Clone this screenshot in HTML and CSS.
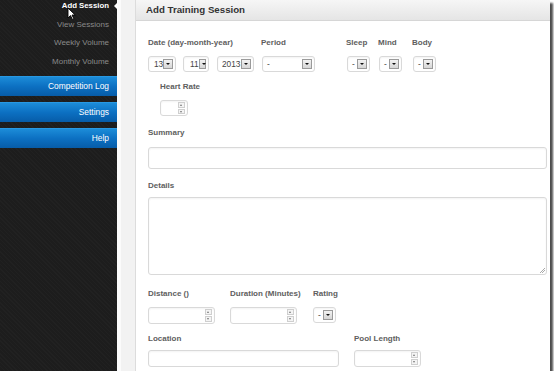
FILE: index.html
```html
<!DOCTYPE html>
<html lang="en">
<head>
    <meta charset="UTF-8">
    <meta name="viewport" content="width=device-width, initial-scale=1.0">
    <title>Add Training Session</title>
    <link rel="stylesheet" href="styles.css">
</head>
<body>
    <div class="frame">
        <!-- Left navigation -->
        <div class="sidebar">
            <ul class="subnav">
                <li class="active">Add Session
                    <span class="pointer"></span>
                    <svg class="cursor" width="9" height="13" viewBox="0 0 9 13"><path d="M1 1 L1 11 L3.5 8.6 L5.4 12.4 L6.8 11.7 L5 8 L8.2 8 Z" fill="#fff" stroke="#000" stroke-width="0.9"/></svg>
                </li>
                <li>View Sessions</li>
                <li>Weekly Volume</li>
                <li>Monthly Volume</li>
            </ul>
            <a href="#" class="nav-btn first">Competition Log</a>
            <a href="#" class="nav-btn">Settings</a>
            <a href="#" class="nav-btn">Help</a>
        </div>

        <div class="main">
            <div class="panel">
                <div class="panel-header">Add Training Session</div>
                <form class="panel-body">
                    <div class="row row-top">
                        <div class="group g-date">
                            <label>Date (day-month-year)</label>
                            <div class="controls">
                                <div class="dropdown w-day"><span>13</span><i class="btn"></i></div>
                                <div class="dropdown w-month"><span>11</span><i class="btn"></i></div>
                                <div class="dropdown w-year"><span>2013</span><i class="btn"></i></div>
                            </div>
                        </div>
                        <div class="group g-period">
                            <label>Period</label>
                            <div class="controls">
                                <div class="dropdown w-period"><span>-</span><i class="btn"></i></div>
                            </div>
                        </div>
                        <div class="group g-sleep">
                            <label>Sleep</label>
                            <div class="controls">
                                <div class="dropdown w-small"><span>-</span><i class="btn"></i></div>
                            </div>
                        </div>
                        <div class="group g-mind">
                            <label>Mind</label>
                            <div class="controls">
                                <div class="dropdown w-small"><span>-</span><i class="btn"></i></div>
                            </div>
                        </div>
                        <div class="group">
                            <label>Body</label>
                            <div class="controls">
                                <div class="dropdown w-small"><span>-</span><i class="btn"></i></div>
                            </div>
                        </div>
                    </div>

                    <div class="group g-heart">
                        <label>Heart Rate</label>
                        <div class="controls">
                            <div class="number w-heart"><i class="spin"><b class="up"></b><b class="down"></b></i></div>
                        </div>
                    </div>

                    <div class="group g-summary">
                        <label>Summary</label>
                        <div class="text-input summary"></div>
                    </div>

                    <div class="group g-details">
                        <label>Details</label>
                        <div class="text-input details"><i class="grip"></i></div>
                    </div>

                    <div class="row row-dist">
                        <div class="group g-distance">
                            <label>Distance ()</label>
                            <div class="controls">
                                <div class="number w-dist"><i class="spin"><b class="up"></b><b class="down"></b></i></div>
                            </div>
                        </div>
                        <div class="group g-duration">
                            <label>Duration (Minutes)</label>
                            <div class="controls">
                                <div class="number w-dist"><i class="spin"><b class="up"></b><b class="down"></b></i></div>
                            </div>
                        </div>
                        <div class="group">
                            <label>Rating</label>
                            <div class="controls">
                                <div class="dropdown w-rating"><span>-</span><i class="btn"></i></div>
                            </div>
                        </div>
                    </div>

                    <div class="row row-loc">
                        <div class="group g-location">
                            <label>Location</label>
                            <div class="controls">
                                <div class="text-input location"></div>
                            </div>
                        </div>
                        <div class="group">
                            <label>Pool Length</label>
                            <div class="controls">
                                <div class="number w-dist"><i class="spin"><b class="up"></b><b class="down"></b></i></div>
                            </div>
                        </div>
                    </div>
                </form>
            </div>
        </div>
    </div>
</body>
</html>
```

FILE: styles.css
```css
body {
    margin: 0;
    padding: 0;
    background-color: #ffffff;
    font-family: "Liberation Sans", Arial, sans-serif;
}

.frame {
    display: flex;
    width: 550px;
    height: 371px;
    overflow: hidden;
    box-shadow: 3px 3px 2px rgba(0, 0, 0, 0.7);
}

/* Sidebar */
.sidebar {
    width: 117px;
    flex-shrink: 0;
    background-color: #1d1d1d;
    background-image: repeating-linear-gradient(45deg, rgba(255, 255, 255, 0.02) 0 1px, transparent 1px 3px);
}

.subnav {
    list-style: none;
    margin: 0;
    padding: 0;
}

.subnav li {
    position: relative;
    height: 18.5px;
    line-height: 12px;
    padding-right: 8px;
    text-align: right;
    font-size: 8px;
    color: #8a8a8a;
}

.subnav li.active {
    color: #ffffff;
    font-weight: bold;
    font-size: 7.8px;
}

.pointer {
    position: absolute;
    right: -1px;
    top: 2px;
    width: 0;
    height: 0;
    border-top: 4px solid transparent;
    border-bottom: 4px solid transparent;
    border-right: 4px solid #ffffff;
}

.cursor {
    position: absolute;
    left: 67px;
    top: 7px;
}

.nav-btn {
    display: block;
    height: 20px;
    line-height: 19px;
    margin-bottom: 6px;
    padding-right: 8px;
    text-align: right;
    font-size: 8.4px;
    color: #ffffff;
    text-decoration: none;
    background: linear-gradient(to bottom, #1c8cd8 0%, #0c70c2 50%, #075ca8 100%);
    border-top: 1px solid #2898e2;
    box-sizing: border-box;
}

.nav-btn.first {
    margin-top: 2px;
}

/* Main area */
.main {
    flex: 1;
    display: flex;
    padding-left: 18px;
    background: linear-gradient(to right, #fbfbfb 0 4px, #f2f2f2 4px);
}

.panel {
    flex: 1;
    background-color: #ffffff;
    border-left: 1px solid #dcdcdc;
}

.panel-header {
    height: 21px;
    line-height: 20px;
    padding-left: 10px;
    font-size: 9.7px;
    font-weight: bold;
    color: #333333;
    background: linear-gradient(to bottom, #f6f6f6, #e5e5e5);
    border-bottom: 1px solid #d6d6d6;
    box-sizing: border-box;
}

.panel-body {
    margin: 0;
    padding: 15px 0 0 12px;
}

.row {
    display: flex;
}

label {
    display: block;
    height: 14px;
    line-height: 14px;
    font-size: 8px;
    font-weight: bold;
    color: #5e5e5e;
}

.controls {
    display: flex;
    gap: 7px;
    margin-top: 6px;
}

.g-date { width: 113px; }
.g-period { width: 85px; }
.g-sleep { width: 32px; }
.g-mind { width: 34px; }

.g-heart {
    margin: 8px 0 0 12px;
}

.g-summary { margin-top: 10px; }
.g-summary label { margin-bottom: 7px; }

.g-details { margin-top: 10px; }
.g-details label { margin-bottom: 4px; }

.row-dist { margin-top: 12px; }
.g-distance { width: 82px; }
.g-duration { width: 83px; }

.row-loc { margin-top: 8px; }
.row-loc .controls { margin-top: 4px; }
.g-location { width: 206px; }

/* Fake form controls */
.dropdown,
.number,
.text-input {
    position: relative;
    box-sizing: border-box;
    border: 1px solid #d9d9d9;
    border-radius: 3px;
    background: #ffffff;
    box-shadow: inset 0 1px 2px rgba(0, 0, 0, 0.05);
}

.dropdown {
    display: flex;
    align-items: center;
    justify-content: space-between;
    height: 16px;
    padding: 0 2px 0 4px;
    font-size: 8.3px;
    color: #444444;
}

.w-day { width: 28px; }
.w-day span { margin-left: 1px; }
.w-month { width: 26px; }
.w-month span { margin-left: 2px; }
.w-year { width: 37px; margin-left: 1px; }
.w-period { width: 53px; margin-left: 1px; }
.w-small { width: 23px; margin-left: 1px; }
.w-rating { width: 23px; }

.btn {
    display: block;
    width: 10px;
    height: 10px;
    box-sizing: border-box;
    border: 1px solid #9a9a9a;
    background: linear-gradient(to bottom, #f2f2f2, #d6d6d6);
    position: relative;
}

.btn::after {
    content: "";
    position: absolute;
    left: 2px;
    top: 3px;
    border-left: 2.5px solid transparent;
    border-right: 2.5px solid transparent;
    border-top: 2.5px solid #111111;
}

.number {
    height: 17px;
}

.w-heart { width: 28px; height: 16px; }
.w-dist { width: 67px; }

.spin {
    position: absolute;
    right: 2px;
    top: 1px;
    bottom: 1px;
    width: 7px;
    display: flex;
    flex-direction: column;
    gap: 1px;
}

.spin b {
    flex: 1;
    position: relative;
    border: 1px solid #cfcfcf;
    background: #f4f4f4;
}

.spin b::after {
    content: "";
    position: absolute;
    left: 1px;
    top: 1px;
    border-left: 1.5px solid transparent;
    border-right: 1.5px solid transparent;
}

.spin .up::after { border-bottom: 2px solid #777777; }
.spin .down::after { border-top: 2px solid #777777; }

.text-input.summary {
    width: 399px;
    height: 22px;
}

.text-input.details {
    width: 399px;
    height: 78px;
}

.text-input.location {
    width: 191px;
    height: 17px;
}

.grip {
    position: absolute;
    right: 1px;
    bottom: 1px;
    width: 5px;
    height: 5px;
    background: linear-gradient(135deg, transparent 0 45%, #aaaaaa 45% 55%, transparent 55% 70%, #aaaaaa 70% 80%, transparent 80%);
}
```
